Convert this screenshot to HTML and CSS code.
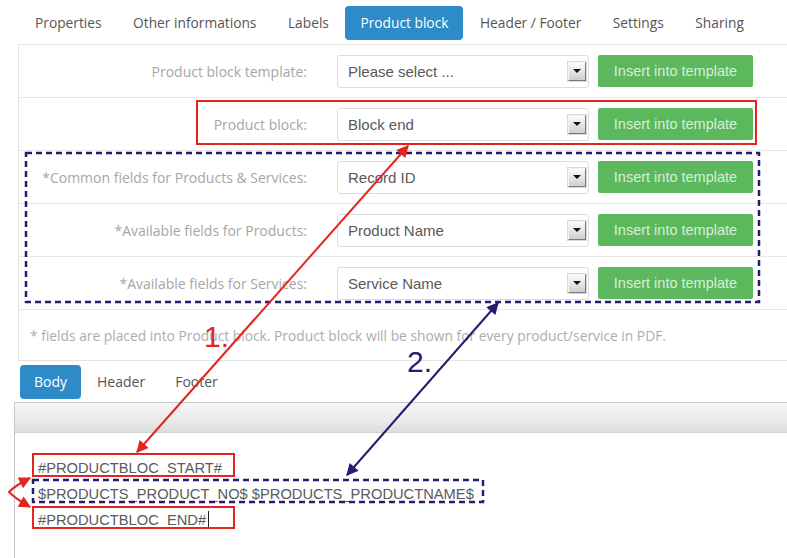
FILE: index.html
```html
<!DOCTYPE html>
<html>
<head>
<meta charset="utf-8">
<link rel="stylesheet" href="styles.css">
</head>
<body>
<div class="page">
  <nav class="tabs">
    <span class="tab">Properties</span>
    <span class="tab">Other informations</span>
    <span class="tab">Labels</span>
    <span class="tab active">Product block</span>
    <span class="tab">Header / Footer</span>
    <span class="tab">Settings</span>
    <span class="tab">Sharing</span>
  </nav>

  <div class="panel">
    <div class="row">
      <label class="lbl">Product block template:</label>
      <div class="select"><span class="val">Please select ...</span><span class="drop"></span></div>
      <button class="btn">Insert into template</button>
    </div>
    <div class="row">
      <label class="lbl">Product block:</label>
      <div class="select"><span class="val">Block end</span><span class="drop"></span></div>
      <button class="btn">Insert into template</button>
    </div>
    <div class="row">
      <label class="lbl">*Common fields for Products &amp; Services:</label>
      <div class="select"><span class="val">Record ID</span><span class="drop"></span></div>
      <button class="btn">Insert into template</button>
    </div>
    <div class="row">
      <label class="lbl">*Available fields for Products:</label>
      <div class="select"><span class="val">Product Name</span><span class="drop"></span></div>
      <button class="btn">Insert into template</button>
    </div>
    <div class="row">
      <label class="lbl">*Available fields for Services:</label>
      <div class="select"><span class="val">Service Name</span><span class="drop"></span></div>
      <button class="btn">Insert into template</button>
    </div>
    <div class="note">* fields are placed into Product block. Product block will be shown for every product/service in PDF.</div>
  </div>

  <nav class="tabs sub">
    <span class="tab active">Body</span>
    <span class="tab">Header</span>
    <span class="tab">Footer</span>
  </nav>

  <div class="editor">
    <div class="toolbar"></div>
    <div class="content">
      <div class="code">#PRODUCTBLOC_START#</div>
      <div class="code">$PRODUCTS_PRODUCT_NO$ $PRODUCTS_PRODUCTNAME$</div>
      <div class="code">#PRODUCTBLOC_END#<span class="caret"></span></div>
    </div>
  </div>

  <svg class="annot" width="787" height="558" viewBox="0 0 787 558">
    <defs>
      <marker id="ar" viewBox="0 0 10 10" refX="9" refY="5" markerWidth="7" markerHeight="6" orient="auto-start-reverse" markerUnits="strokeWidth">
        <path d="M0 0 L10 5 L0 10 z" fill="#e2261f"/>
      </marker>
      <marker id="ab" viewBox="0 0 10 10" refX="9" refY="5" markerWidth="7" markerHeight="6" orient="auto-start-reverse" markerUnits="strokeWidth">
        <path d="M0 0 L10 5 L0 10 z" fill="#241c6e"/>
      </marker>
    </defs>
    <rect x="197" y="101" width="559" height="43" fill="none" stroke="#e2261f" stroke-width="2"/>
    <rect x="26" y="153" width="733" height="149" fill="none" stroke="#241c6e" stroke-width="2.5" stroke-dasharray="6 4"/>
    <rect x="33" y="454" width="201" height="22" fill="none" stroke="#e2261f" stroke-width="2"/>
    <rect x="33" y="480" width="450" height="22" fill="none" stroke="#241c6e" stroke-width="2.5" stroke-dasharray="6 4"/>
    <rect x="33" y="507" width="201" height="21" fill="none" stroke="#e2261f" stroke-width="2"/>
    <line x1="137" y1="452" x2="408" y2="146" stroke="#e2261f" stroke-width="2" marker-start="url(#ar)" marker-end="url(#ar)"/>
    <line x1="347" y1="475" x2="498" y2="303" stroke="#241c6e" stroke-width="2" marker-start="url(#ab)" marker-end="url(#ab)"/>
    <path d="M30 478 Q16 485 9 492 Q16 499 30 507" fill="none" stroke="#e2261f" stroke-width="2" marker-start="url(#ar)" marker-end="url(#ar)"/>
    <text x="204" y="347" class="num red">1.</text>
    <text x="407" y="372" class="num blue">2.</text>
  </svg>
</div>
</body>
</html>
```

FILE: styles.css
```css
html, body {
  margin: 0;
  padding: 0;
  background: #fff;
}

.page {
  position: relative;
  width: 787px;
  height: 558px;
  overflow: hidden;
  font-family: "Open Sans", "Liberation Sans", sans-serif;
}

.tabs {
  display: flex;
  gap: 1.5px;
  padding: 6px 0 0 20px;
}

.tab {
  height: 34px;
  line-height: 34px;
  padding: 0 15px;
  font-size: 13.75px;
  color: #555;
  border-radius: 4px;
  white-space: nowrap;
}

.tab.active {
  background: #2d8bc8;
  color: #fff;
}

.panel {
  margin: 4px 0 0 18px;
  width: 820px;
  border: 1px solid #e4e4e4;
}

.row {
  display: flex;
  align-items: center;
  height: 52px;
  border-bottom: 1px solid #e8e8e8;
}

.lbl {
  width: 288px;
  flex: none;
  text-align: right;
  font-size: 14px;
  color: #a6a6a6;
  white-space: nowrap;
}

.select {
  box-sizing: border-box;
  width: 252px;
  height: 33px;
  margin-left: 30px;
  flex: none;
  display: flex;
  align-items: center;
  border: 1px solid #dcdcdc;
  border-radius: 3px;
  background: #fff;
  padding: 0 2px 0 10px;
}

.val {
  flex: 1;
  font-family: "Liberation Sans", Arial, sans-serif;
  font-size: 15px;
  color: #595959;
}

.drop {
  box-sizing: border-box;
  width: 18px;
  height: 19px;
  display: flex;
  align-items: center;
  justify-content: center;
  background: linear-gradient(#fbfbfb, #cfcfcf);
  border: 1px solid;
  border-color: #f4f4f4 #7a7a7a #7a7a7a #f4f4f4;
  box-shadow: 0 0 0 1px #d8d8d8;
}

.drop::after {
  content: "";
  border-left: 4px solid transparent;
  border-right: 4px solid transparent;
  border-top: 4px solid #111;
}

.btn {
  width: 155px;
  height: 32px;
  margin-left: 9px;
  flex: none;
  border: none;
  border-radius: 2px;
  background: #5cb85c;
  color: #d9eed9;
  font-family: "Liberation Sans", Arial, sans-serif;
  font-size: 14.5px;
  padding: 0;
}

.note {
  height: 50px;
  display: flex;
  align-items: center;
  padding-left: 11px;
  font-size: 13.8px;
  color: #acacac;
  white-space: nowrap;
}

.tabs.sub {
  padding-top: 4px;
  gap: 2px;
}

.tabs.sub .tab {
  padding: 0 14px;
  font-size: 14px;
}

.editor {
  margin: 3px 0 0 14px;
  height: 200px;
  border-top: 1px solid #c6c6c6;
  border-left: 1px solid #c6c6c6;
}

.toolbar {
  height: 29px;
  background: linear-gradient(#f6f6f6, #e9eaeb 60%, #dcdcdc);
  border-bottom: 1px solid #d2d2d2;
}

.content {
  padding: 22px 0 0 23px;
}

.code {
  height: 26px;
  line-height: 26px;
  font-family: "Liberation Sans", Arial, sans-serif;
  font-size: 14.7px;
  color: #5a5a5a;
  white-space: nowrap;
}

.caret {
  display: inline-block;
  width: 1px;
  height: 17px;
  margin-left: 2px;
  background: #222;
  vertical-align: -3px;
}

.annot {
  position: absolute;
  left: 0;
  top: 0;
  pointer-events: none;
}

.num {
  font-family: "Liberation Sans", Arial, sans-serif;
  font-size: 30px;
}

.num.red { fill: #e2261f; }
.num.blue { fill: #241c6e; }
```
